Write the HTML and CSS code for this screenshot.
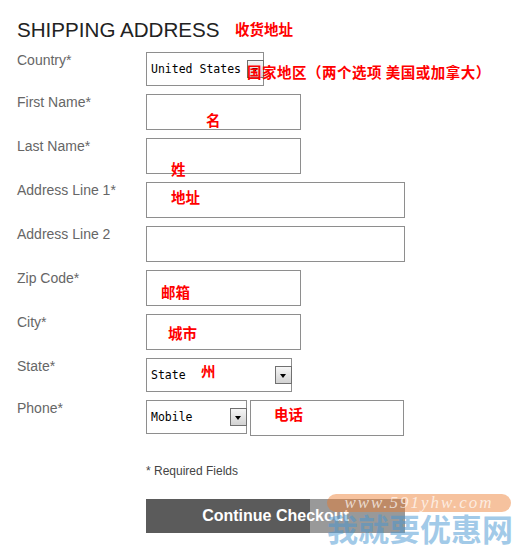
FILE: index.html
```html
<!DOCTYPE html>
<html>
<head>
    <title>Shipping Address</title>
    <link rel="stylesheet" href="styles.css">
</head>
<body>
    <div class="page">
        <h2 class="title">SHIPPING ADDRESS</h2>

        <form class="address-form">
            <div class="row">
                <label>Country*</label>
                <div class="select country">
                    <span>United States</span>
                    <span class="arrow"></span>
                </div>
            </div>
            <div class="row">
                <label for="first-name">First Name*</label>
                <input type="text" id="first-name" class="text">
            </div>
            <div class="row">
                <label for="last-name">Last Name*</label>
                <input type="text" id="last-name" class="text">
            </div>
            <div class="row">
                <label for="address-1">Address Line 1*</label>
                <input type="text" id="address-1" class="text wide">
            </div>
            <div class="row">
                <label for="address-2">Address Line 2</label>
                <input type="text" id="address-2" class="text wide">
            </div>
            <div class="row">
                <label for="zip">Zip Code*</label>
                <input type="text" id="zip" class="text">
            </div>
            <div class="row">
                <label for="city">City*</label>
                <input type="text" id="city" class="text">
            </div>
            <div class="row">
                <label>State*</label>
                <div class="select state">
                    <span>State</span>
                    <span class="arrow"></span>
                </div>
            </div>
            <div class="row">
                <label for="phone">Phone*</label>
                <div class="phone-group">
                    <div class="select phone-type">
                        <span>Mobile</span>
                        <span class="arrow"></span>
                    </div>
                    <input type="text" id="phone" class="text phone-number">
                </div>
            </div>
        </form>

        <p class="note">* Required Fields</p>
        <button class="checkout-btn" type="button">Continue Checkout</button>

        <!-- 标注 -->
        <span class="mark mark-title">收货地址</span>
        <span class="mark mark-country">国家地区（两个选项 美国或加拿大）</span>
        <span class="mark mark-first">名</span>
        <span class="mark mark-last">姓</span>
        <span class="mark mark-address">地址</span>
        <span class="mark mark-zip">邮箱</span>
        <span class="mark mark-city">城市</span>
        <span class="mark mark-state">州</span>
        <span class="mark mark-phone">电话</span>

        <!-- 水印 -->
        <div class="wm-shade"></div>
        <div class="wm-url">www.591yhw.com</div>
        <div class="wm-name">我就要优惠网</div>
    </div>
</body>
</html>
```

FILE: styles.css
```css
body {
    margin: 0;
    background: #fff;
    font-family: "Liberation Sans", Arial, sans-serif;
}
.page {
    position: relative;
    width: 526px;
    height: 557px;
    box-sizing: border-box;
    padding: 18px 0 0 17px;
    overflow: hidden;
}
.title {
    margin: 0;
    font-size: 20.6px;
    line-height: 24px;
    font-weight: normal;
    color: #222;
}
.address-form {
    display: flex;
    flex-direction: column;
    gap: 8px;
    margin-top: 10px;
}
.row {
    display: flex;
    align-items: flex-start;
}
.row label {
    flex: none;
    width: 129px;
    font-size: 14px;
    line-height: 16px;
    color: #666;
}
.text {
    box-sizing: border-box;
    width: 155px;
    height: 36px;
    margin: 0;
    padding: 0 4px;
    border: 1px solid #8e8e8e;
    background: #fff;
    outline: none;
}
.text.wide {
    width: 259px;
}
.select {
    box-sizing: border-box;
    display: flex;
    align-items: center;
    justify-content: space-between;
    height: 34px;
    padding-left: 4px;
    border: 1px solid #8e8e8e;
    background: #fff;
    font-family: "DejaVu Sans Mono", "Liberation Mono", monospace;
    font-size: 11.5px;
    color: #000;
}
.select .arrow {
    position: relative;
    box-sizing: border-box;
    width: 17px;
    height: 18px;
    margin-right: -1px;
    border: 1px solid #707070;
    background: linear-gradient(#f6f6f6, #d2d2d2);
}
.select .arrow::after {
    content: "";
    position: absolute;
    left: 4px;
    top: 7px;
    border-left: 3.5px solid transparent;
    border-right: 3.5px solid transparent;
    border-top: 4px solid #000;
}
.select.country {
    width: 118px;
}
.select.state {
    width: 146px;
}
.phone-group {
    display: flex;
    gap: 3px;
}
.select.phone-type {
    width: 101px;
}
.text.phone-number {
    width: 154px;
}
.note {
    margin: 28px 0 0 129px;
    font-size: 12px;
    line-height: 14px;
    color: #444;
}
.checkout-btn {
    display: block;
    width: 259px;
    height: 34px;
    margin: 21px 0 0 129px;
    padding: 0;
    border: none;
    background: #5b5b5b;
    color: #fff;
    font-family: "Liberation Sans", Arial, sans-serif;
    font-size: 16px;
    font-weight: bold;
    cursor: pointer;
}

/* red notes */
.mark {
    position: absolute;
    font-family: "Noto Sans CJK SC", sans-serif;
    font-size: 14.5px;
    font-weight: bold;
    line-height: 1;
    color: #f00;
    white-space: nowrap;
}
.mark-title { left: 235px; top: 22px; }
.mark-country { left: 247px; top: 65px; letter-spacing: 0.5px; }
.mark-first { left: 206px; top: 113px; }
.mark-last { left: 171px; top: 162px; }
.mark-address { left: 171px; top: 190px; }
.mark-zip { left: 161px; top: 285px; }
.mark-city { left: 168px; top: 326px; }
.mark-state { left: 201px; top: 364px; }
.mark-phone { left: 274px; top: 407px; }

/* watermark */
.wm-shade {
    position: absolute;
    left: 310px;
    top: 499px;
    width: 95px;
    height: 34px;
    background: rgba(255, 255, 255, 0.38);
}
.wm-url {
    position: absolute;
    left: 327px;
    top: 494px;
    width: 184px;
    height: 18px;
    border-radius: 9px;
    background: rgba(235, 120, 40, 0.45);
    font-family: "Liberation Serif", serif;
    font-style: italic;
    font-size: 17px;
    line-height: 18px;
    letter-spacing: 2px;
    text-align: center;
    color: rgba(255, 255, 255, 0.7);
}
.wm-name {
    position: absolute;
    left: 327px;
    top: 512px;
    font-family: "Noto Sans CJK SC", sans-serif;
    font-size: 31px;
    font-weight: bold;
    line-height: 1;
    color: rgba(70, 150, 210, 0.5);
    white-space: nowrap;
}
```
